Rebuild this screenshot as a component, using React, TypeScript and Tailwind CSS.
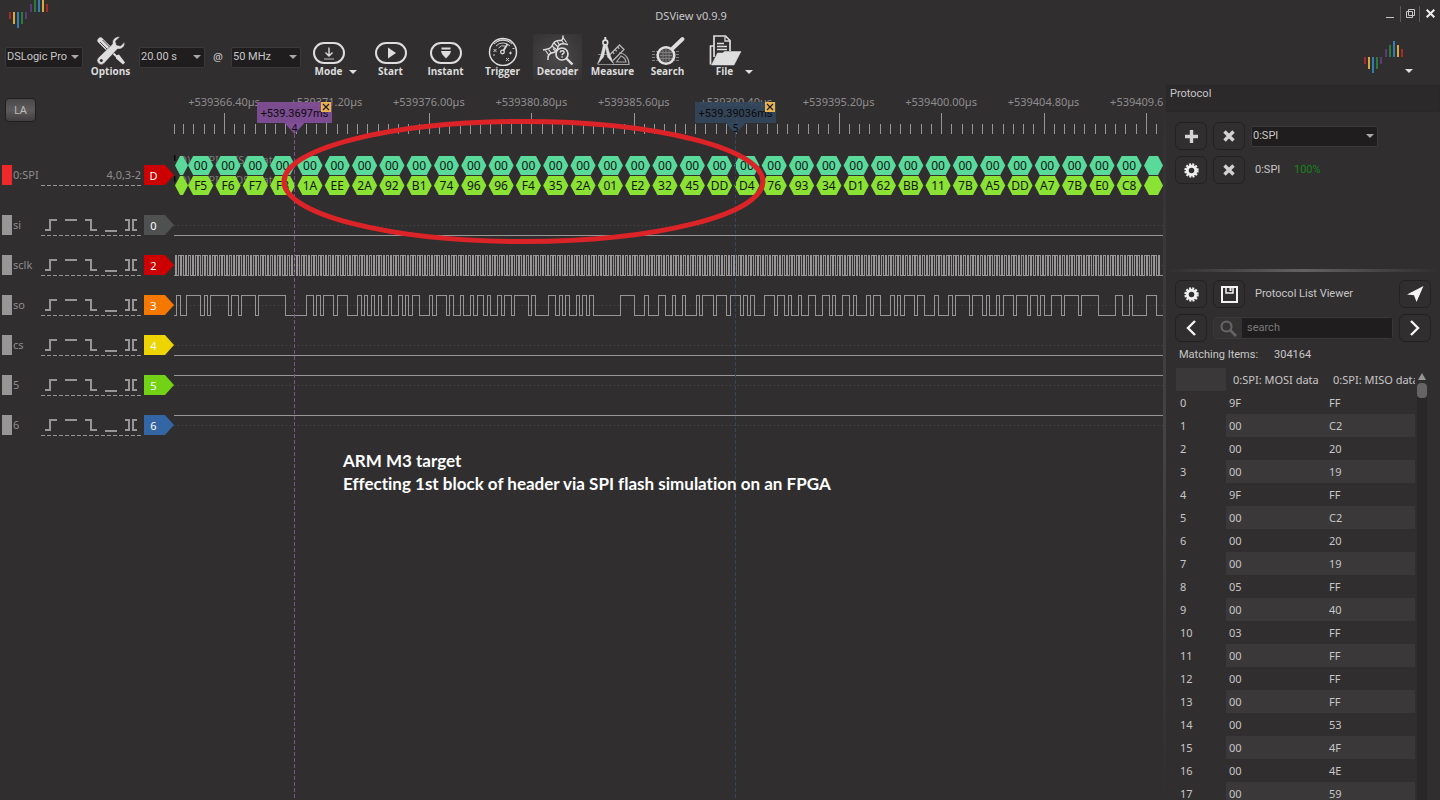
import type { ReactNode } from "react";

const GRAY = "#979596";

/* ---------- small pieces ---------- */

function LogoMark() {
  const bars: [number, number, number, string][] = [
    [0, 16, 7, "#a52a2c"],
    [4, 16, 12, "#d9a93c"],
    [8, 16, 16, "#2f7fb5"],
    [12, 16, 12, "#2a7a3c"],
    [16, 16, 7, "#5b3a78"],
    [21, 8, 8, "#5b3a78"],
    [25, 4, 12, "#2a7a3c"],
    [29, 0, 16, "#2f7fb5"],
    [33, 4, 12, "#d9a93c"],
    [37, 8, 8, "#a52a2c"],
  ];
  return (
    <svg width="40" height="32" viewBox="0 0 40 32" aria-hidden="true">
      {bars.map(([x, y, h, c]) => (
        <rect key={x} x={x} y={y} width="2" height={h} fill={c} />
      ))}
    </svg>
  );
}

function Caret({ fill = "#dedede" }: { fill?: string }) {
  return (
    <svg width="8" height="4" viewBox="0 0 8 4" aria-hidden="true">
      <path d="M0 0h8L4 4z" fill={fill} />
    </svg>
  );
}

function Combo({ label, value, width }: { label: string; value: string; width: string }) {
  return (
    <div className={`relative h-[21px] shrink-0 ${width}`}>
      <select
        aria-label={label}
        defaultValue={value}
        className="h-full w-full appearance-none rounded-xs border border-[#3b393a] bg-[#1f1d1e] pl-px font-['Roboto',sans-serif] text-[11px] text-[#c8c6c7] outline-none"
      >
        <option>{value}</option>
      </select>
      <span className="pointer-events-none absolute inset-y-0 right-1 flex items-center">
        <Caret fill="#a9a7a8" />
      </span>
    </div>
  );
}

function ToolButton({
  label,
  children,
  active = false,
}: {
  label: string;
  children: ReactNode;
  active?: boolean;
}) {
  return (
    <button
      type="button"
      className={`flex h-[46px] w-[49px] shrink-0 flex-col items-center justify-end ${
        active ? "bg-radial from-[#4b494a] to-[#343233]" : ""
      }`}
    >
      {children}
      <span className="h-[14px] font-['Open_Sans',sans-serif] text-[10px] leading-[10px] font-bold text-[#dcdcdc]">
        {label}
      </span>
    </button>
  );
}

function Pill({ children }: { children: ReactNode }) {
  return (
    <svg width="34" height="30" viewBox="0 0 34 30" aria-hidden="true">
      <rect x="2" y="7" width="30" height="20" rx="10" fill="none" stroke="#dedede" strokeWidth="2" />
      {children}
    </svg>
  );
}

function PanelButton({ label, children }: { label: string; children: ReactNode }) {
  return (
    <button
      type="button"
      aria-label={label}
      className="flex h-7 w-8 shrink-0 items-center justify-center rounded-md border border-[#232122] bg-[#302e2f]"
    >
      {children}
    </button>
  );
}

/* ---------- icons ---------- */

function OptionsIcon() {
  return (
    <svg width="30" height="30" viewBox="0 0 30 30" aria-hidden="true">
      <path d="M4.5 4.5L12 12" stroke="#dedede" strokeWidth="6" strokeLinecap="round" />
      <path d="M4 6l8 8M6.500 4l8 8" stroke="#555354" strokeWidth="1" />
      <path d="M14 14l8 8" stroke="#dedede" strokeWidth="2" />
      <path d="M20 19.500l3-1 6 8-2 2-7-6z" fill="#dedede" />
      <path
        d="M24 1c-4-1-8 2-7.500 7L2.500 21.500a4 4 0 0 0 5.500 6L21.500 13c4 .8 8-2.500 7-7l-4 4-4-1-1-4z"
        fill="#dedede"
        stroke="#302e2f"
        strokeWidth=".5"
      />
      <circle cx="5.300" cy="24.500" r="1.500" fill="#302e2f" />
    </svg>
  );
}

function TriggerIcon() {
  return (
    <svg width="30" height="32" viewBox="0 0 30 32" fill="none" stroke="#dedede" aria-hidden="true">
      <circle cx="15" cy="18" r="13.500" strokeWidth="1.500" />
      <circle cx="14.500" cy="18" r="1.800" strokeWidth="1.300" />
      <path d="M15.500 16.500l4-6.500" strokeWidth="1.800" />
      <path d="M10.500 14a6 6 0 0 1 6.500-2M8 12a9.500 9.500 0 0 1 14 0M6 10a12.500 12.500 0 0 1 18 0M8.500 8a11 11 0 0 1 13 0" strokeWidth=".9" />
      <path d="M5.500 15l3 3m0-3l-3 3M21 19l3 0m-1.500-1.500v3M18 24l3 3m0-3l-3 3M5 21h2M24.500 14.500h2" strokeWidth=".9" />
    </svg>
  );
}

function DecoderIcon() {
  return (
    <svg width="34" height="32" viewBox="0 0 34 32" fill="none" stroke="#dedede" aria-hidden="true">
      <path
        d="M2 16c4-1 7-.5 9-4 1.500-4 4-6 8-5.500 3 .3 3-2 3-5M7 26c-.5-4 .5-6 3.500-7 4-1 6-1.500 6.500-6 .5-3 4-4 10-2.500"
        strokeWidth="1.500"
      />
      <path d="M4.500 16.500l3.500 5M7.500 15.500l3 4M11 12l5 4M13 9l4 4M16 7l3 4.500M20 6l3 3.500M22 3.500l3.500 5M12 14.500l3 3" strokeWidth="1.100" />
      <circle cx="21" cy="20" r="6" fill="#403e3f" strokeWidth="1.700" />
      <path d="M25.500 24.500l6 6" strokeWidth="2.400" />
      <path d="M19.200 18.500c.2-2.500 4-2.300 3.800 0-.1 1.300-1.900 1.200-1.900 2.700M21.100 22.200v1.300" strokeWidth="1.500" />
    </svg>
  );
}

function MeasureIcon() {
  return (
    <svg width="36" height="32" viewBox="0 0 36 32" fill="none" stroke="#dedede" aria-hidden="true">
      <path d="M17 30.500h17c0-6.500-4-11.500-10-11.500M21.500 28H31c-.5-3-2.500-5-5-6z" stroke="#a9a7a8" strokeWidth="1.200" />
      <path d="M14.500 21L24.500 11l4.500 4.500-11 11M17.500 18l1.800 1.800M20 15.500l1.800 1.800M22.500 13l1.800 1.800" stroke="#b9b7b8" strokeWidth="1.300" />
      <path d="M3 20.500h12M2.500 30L11 12M2.500 30.500h15" stroke="#8a8889" strokeWidth="1" />
      <path d="M10.300 3v3" strokeWidth="2" />
      <circle cx="10.300" cy="8.500" r="2.400" strokeWidth="1.600" />
      <path d="M8.500 10.500L6 21l-3 8.500 5.500-6.500 2.500-11zM12 10.500l3 10.500 3.500 8.500-6-6.500-2-11z" fill="#dedede" strokeWidth=".5" />
    </svg>
  );
}

function SearchToolIcon() {
  return (
    <svg width="34" height="32" viewBox="0 0 34 32" fill="none" stroke="#dedede" aria-hidden="true">
      <path d="M1 17.500h28M1 20.500h28M1 23.500h28M1 26.500h28" stroke="#7d7b7c" strokeDasharray="3 1" />
      <circle cx="15" cy="21.500" r="8.300" fill="#4a4849" strokeWidth="2.600" />
      <path d="M9 18.500h12M9 21.500h12M9 24.500h12M12 16v11M15 15v13M18 16v11" stroke="#858384" strokeWidth=".9" />
      <path d="M21.500 14.500L31.500 5" strokeWidth="3.800" strokeLinecap="round" />
    </svg>
  );
}

function FileIcon() {
  return (
    <svg width="34" height="32" viewBox="0 0 34 32" fill="none" stroke="#dedede" aria-hidden="true">
      <path d="M6 12H2.500v18.500M6 23V2h11.500l4.500 4.500V17" strokeWidth="1.700" />
      <path d="M17 2.500V7h5M9 9.500h7M9 12.500h10M9 15.500h10" strokeWidth="1.300" />
      <path d="M9.500 19h5l2-1.500h16.500L26 31H3.500z" fill="#dedede" strokeWidth=".5" />
    </svg>
  );
}

function PlusIcon() {
  return (
    <svg width="13" height="13" viewBox="0 0 13 13" aria-hidden="true">
      <path d="M6.500 0v13M0 6.500h13" stroke="#d4d2d3" strokeWidth="3.400" />
    </svg>
  );
}

function CrossIcon() {
  return (
    <svg width="12" height="12" viewBox="0 0 12 12" aria-hidden="true">
      <path d="M1.500 1.500l9 9M10.500 1.500l-9 9" stroke="#d4d2d3" strokeWidth="3.400" />
    </svg>
  );
}

function GearIcon() {
  return (
    <svg width="15" height="15" viewBox="0 0 15 15" fill="none" stroke="#f0f0f0" aria-hidden="true">
      <circle cx="7.500" cy="7.500" r="4.300" strokeWidth="3" />
      <circle cx="7.500" cy="7.500" r="6.200" strokeWidth="2" strokeDasharray="2 1.246" />
    </svg>
  );
}

function SaveIcon() {
  return (
    <svg width="17" height="17" viewBox="0 0 17 17" fill="none" stroke="#f4f4f4" aria-hidden="true">
      <rect x="1" y="1" width="15" height="15" strokeWidth="2" />
      <path d="M5 1v6h7V1" strokeWidth="1.500" />
      <path d="M9.500 2v3" strokeWidth="2" />
    </svg>
  );
}

function SendIcon() {
  return (
    <svg width="17" height="16" viewBox="0 0 17 16" aria-hidden="true">
      <path d="M16.500 0L0 8.500l7 .8 2.500 6.700z" fill="#f4f4f4" />
    </svg>
  );
}

function Chevron({ dir }: { dir: "left" | "right" }) {
  return (
    <svg width="10" height="16" viewBox="0 0 10 16" fill="none" aria-hidden="true">
      <path d={dir === "left" ? "M9 1L2 8l7 7" : "M1 1l7 7-7 7"} stroke="#f4f4f4" strokeWidth="2.400" />
    </svg>
  );
}

/* ---------- channel column ---------- */

type Channel = { name: string; tag: string; color: string };

const CHANNELS: Channel[] = [
  { name: "si", tag: "0", color: "#4f5050" },
  { name: "sclk", tag: "2", color: "#cc0000" },
  { name: "so", tag: "3", color: "#f57900" },
  { name: "cs", tag: "4", color: "#edd400" },
  { name: "5", tag: "5", color: "#73d216" },
  { name: "6", tag: "6", color: "#3465a4" },
];

function Tag({ text, color }: { text: string; color: string }) {
  return (
    <svg width="30" height="20" viewBox="0 0 30 20" className="shrink-0" role="img" aria-label={text}>
      <path d="M0 0h21l9 10-9 10H0z" fill={color} />
      <text x="9.500" y="14.500" textAnchor="middle" fontSize="11" fill="#fff">
        {text}
      </text>
    </svg>
  );
}

function TriggerEdges() {
  return (
    <svg width="100" height="22" viewBox="0 0 100 22" fill="none" stroke={GRAY} shapeRendering="crispEdges" aria-hidden="true">
      <path
        d="M4 16h5V6h7M24 6h12M44 6h6v10h6M64 17h12M84 6h4v10h-4M96 6h-4v10h4"
        strokeWidth="2"
      />
      <path d="M0 21.500h100" strokeDasharray="4 2" />
    </svg>
  );
}

function ChannelColumn() {
  return (
    <aside className="flex w-[174px] shrink-0 flex-col text-[11px] text-[#8f8d8e]">
      <div className="h-[65px] pt-[13px] pl-[5px]">
        <button
          type="button"
          className="h-6 w-[31px] rounded-sm border border-[#201e1f] bg-linear-to-b from-[#4a4849] via-[#5c5a5b] to-[#403e3f] text-[11px] text-[#bcbabb]"
        >
          LA
        </button>
      </div>
      <div className="mb-[5px] flex h-[50px] items-center pl-0.5">
        <span className="h-5 w-2.5 bg-[#ef2929]" />
        <span className="w-[29px] pl-px whitespace-nowrap">0:SPI</span>
        <span className="mr-[3px] w-[100px] text-right leading-5">
          4,0,3-2
          <svg width="100" height="1" className="block" aria-hidden="true">
            <path d="M0 .5h100" stroke={GRAY} strokeDasharray="4 2" />
          </svg>
        </span>
        <Tag text="D" color="#cc0000" />
      </div>
      {CHANNELS.map((c) => (
        <div key={c.tag} className="flex h-10 items-center pl-0.5">
          <span className="h-5 w-2.5 bg-[#979596]" />
          <span className="w-[29px] pl-px">{c.name}</span>
          <span className="mr-[3px]">
            <TriggerEdges />
          </span>
          <Tag text={c.tag} color={c.color} />
        </div>
      ))}
    </aside>
  );
}

/* ---------- wave plot ---------- */

/* Plot coordinates start at the left edge of the first sample and the top of the ruler. */
const END = 989;
const RULER = ["366.40", "371.20", "376.00", "380.80", "385.60", "390.40", "395.20", "400.00", "404.80", "409.60"];
const FIRST_MAJOR = 50;
const MAJOR = 102.44;

const BYTES =
  "F5 F6 F7 F8 1A EE 2A 92 B1 74 96 96 F4 35 2A 01 E2 32 45 DD D4 76 93 34 D1 62 BB 11 7B A5 DD A7 7B E0 C8".split(" ");
const BYTE_STEP = 27.31;

/* Edge times of the "so" line, in thirds of a pixel; the line starts low. */
const SO_EDGES = [
  7, 19, 37, 79, 91, 100, 109, 161, 172, 193, 202, 244, 253, 334, 397, 418, 427, 439, 448, 478, 490, 520, 550, 562,
  571, 580, 592, 601, 613, 622, 643, 652, 673, 685, 694, 703, 715, 736, 766, 775, 787, 817, 826, 838, 859, 868, 889,
  898, 910, 928, 940, 949, 970, 982, 991, 1012, 1021, 1063, 1072, 1084, 1123, 1144, 1156, 1165, 1174, 1186, 1207,
  1216, 1225, 1237, 1246, 1258, 1339, 1381, 1411, 1423, 1453, 1474, 1495, 1504, 1525, 1534, 1567, 1576, 1585, 1618,
  1627, 1657, 1669, 1699, 1708, 1720, 1729, 1741, 1771, 1801, 1810, 1831, 1843, 1852, 1873, 1882, 1903, 1924, 1945,
  1966, 1975, 1984, 2005, 2026, 2038, 2047, 2077, 2089, 2098, 2119, 2149, 2161, 2170, 2179, 2191, 2221, 2230, 2251,
  2281, 2293, 2323, 2335, 2344, 2386, 2395, 2425, 2437, 2446, 2467, 2476, 2488, 2518, 2527, 2560, 2569, 2590, 2599,
  2611, 2632, 2662, 2671, 2713, 2722, 2773, 2824, 2845, 2866, 2875, 2917, 2947,
];

function squareWave(edges: number[], low: number, high: number) {
  let d = `M0 ${low}`;
  edges.forEach((x, i) => {
    d += `H${x}V${i % 2 === 0 ? high : low}`;
  });
  return `${d}H${END}`;
}

const soPath = squareWave(SO_EDGES.map((e) => Math.round(e / 3) + 0.5), 230.5, 210.5);
const clockPath = squareWave(
  Array.from({ length: 578 }, (_, i) => Math.floor(1 + i * 1.707) + 0.5),
  190.5,
  170.5,
);

function hex(left: number, right: number, top: number) {
  const c = 5;
  return `M${left + c} ${top}H${right - c}L${right} ${top + 9.5}L${right - c} ${top + 19}H${left + c}L${left} ${top + 9.5}Z`;
}

function ByteRow({ top, fill, values }: { top: number; fill: string; values: string[] }) {
  return (
    <g>
      <path d={hex(1, 14, top)} fill={fill} />
      {values.map((v, i) => {
        const cx = 26.7 + i * BYTE_STEP;
        return (
          <g key={i}>
            <path d={hex(cx - 12.6, cx + 12.6, top)} fill={fill} />
            <text x={cx} y={top + 14} textAnchor="middle" fontSize="12" fill="#141414">
              {v}
            </text>
          </g>
        );
      })}
      <path d={hex(970, 989, top)} fill={fill} />
    </g>
  );
}

function Cursor({
  x,
  left,
  width,
  text,
  index,
  fill,
  line,
}: {
  x: number;
  left: number;
  width: number;
  text: string;
  index: string;
  fill: string;
  line: string;
}) {
  const close = left + width - 11;
  return (
    <g>
      <path d={`M${x} 49V2000`} stroke={line} strokeDasharray="4 2" />
      <rect x={left} y="17" width={width} height="21" fill={fill} fillOpacity=".92" />
      <path d={`M${x - 10} 38h20l-10 11z`} fill={fill} />
      <text
        x={left + width / 2}
        y="32"
        textAnchor="middle"
        className="font-['Roboto',sans-serif]"
        fontSize="11"
        fill="#0c0a0b"
      >
        {text}
      </text>
      <text x={x} y="47" textAnchor="middle" fontSize="10" fill="#0c0a0b">
        {index}
      </text>
      <rect x={close} y="17" width="10" height="10" fill="#e9b44a" />
      <path d={`M${close + 2} 19l6 6m0-6l-6 6`} stroke="#1c1a1b" strokeWidth="1.200" />
    </g>
  );
}

function WavePlot() {
  const minors = Array.from(
    { length: 97 },
    (_, i) => Math.max(0, Math.round(FIRST_MAJOR + (i - 5) * (MAJOR / 10))) + 0.5,
  ).filter((x) => x < END);
  return (
    <main className="min-w-0 flex-1 overflow-hidden">
      <svg className="block h-full w-full" role="img" aria-label="Captured waveforms">
        <g fill="none" stroke={GRAY} shapeRendering="crispEdges">
          {minors.map((x) => (
            <path key={x} d={`M${x} 39v10`} />
          ))}
          {RULER.map((r, i) => (
            <path key={r} d={`M${Math.round(FIRST_MAJOR + i * MAJOR) + 0.5} 28v21`} />
          ))}
        </g>
        <g fontSize="11" fill="#8f8d8e" textAnchor="middle">
          {RULER.map((r, i) => (
            <text key={r} x={FIRST_MAJOR + i * MAJOR} y="21">
              {`+539${r}µs`}
            </text>
          ))}
        </g>

        <g stroke="#4c4a4b" strokeDasharray="1 3" shapeRendering="crispEdges">
          {[140.5, 180.5, 220.5, 260.5, 300.5, 340.5].map((y) => (
            <path key={y} d={`M0 ${y}H${END}`} />
          ))}
        </g>
        <g fill="none" stroke={GRAY} shapeRendering="crispEdges">
          <path d={`M0 150.500H${END}M0 270.500H${END}M0 290.500H${END}M0 330.500H${END}`} />
          <path d={clockPath} />
          <path d={soPath} />
        </g>

        <g fontSize="11" fill="#7d7b7c">
          <text x="5" y="79">D) 0:SPI: MISO data</text>
          <text x="5" y="99">D) 0:SPI: MOSI data</text>
        </g>
        <path d="M.5 70v6M.5 91v6" stroke="#0c0a0b" strokeWidth="2" />
        <ByteRow top={71} fill="#59d99a" values={BYTES.map(() => "00")} />
        <ByteRow top={91} fill="#8ae234" values={BYTES} />

        <Cursor x={120.5} left={83} width={75} text="+539.3697ms" index="4" fill="#824f99" line="#7b5289" />
        <Cursor x={561.5} left={521} width={81} text="+539.39036ms" index="5" fill="#33465c" line="#33475f" />

        <ellipse cx="349.500" cy="96.500" rx="239.500" ry="60" fill="none" stroke="#dc2428" strokeWidth="5" />
        <g className="font-['Lato',sans-serif] font-bold [font-variant-ligatures:none]" fontSize="17" fill="#fff">
          <text x="169" y="382">ARM M3 target</text>
          <text x="169" y="405">Effecting 1st block of header via SPI flash simulation on an FPGA</text>
        </g>
      </svg>
    </main>
  );
}

/* ---------- protocol panel ---------- */

const ROWS: [string, string][] = [
  ["9F", "FF"], ["00", "C2"], ["00", "20"], ["00", "19"], ["9F", "FF"], ["00", "C2"], ["00", "20"], ["00", "19"],
  ["05", "FF"], ["00", "40"], ["03", "FF"], ["00", "FF"], ["00", "FF"], ["00", "FF"], ["00", "53"], ["00", "4F"],
  ["00", "4E"], ["00", "59"],
];

function ProtocolPanel() {
  return (
    <section className="flex w-[274px] shrink-0 flex-col overflow-hidden font-['Roboto',sans-serif]">
      <h2 className="h-[27px] shrink-0 border border-[#292728] bg-[#2b292a] pl-[3px] leading-4">Protocol</h2>

      <div className="flex h-[157px] shrink-0 flex-col gap-1.5 pt-[10px] pl-[9px]">
        <div className="flex items-center gap-1.5">
          <PanelButton label="Add decoder">
            <PlusIcon />
          </PanelButton>
          <PanelButton label="Remove all decoders">
            <CrossIcon />
          </PanelButton>
          <Combo label="Decoder" value="0:SPI" width="w-[127px]" />
        </div>
        <div className="flex items-center gap-1.5">
          <PanelButton label="Decoder settings">
            <GearIcon />
          </PanelButton>
          <PanelButton label="Remove decoder">
            <CrossIcon />
          </PanelButton>
          <span className="w-[37px] pl-1">0:SPI</span>
          <span className="text-[#15851b]">100%</span>
        </div>
      </div>

      <div className="h-[3px] shrink-0 bg-linear-to-r from-[#302e2f] via-[#646263] to-[#302e2f]" />

      <div className="flex shrink-0 flex-col gap-1.5 pt-2 pr-[9px] pl-[9px]">
        <div className="flex items-center gap-1.5">
          <PanelButton label="List settings">
            <GearIcon />
          </PanelButton>
          <PanelButton label="Save list">
            <SaveIcon />
          </PanelButton>
          <h3 className="flex-1 pl-1">Protocol List Viewer</h3>
          <PanelButton label="Go to item">
            <SendIcon />
          </PanelButton>
        </div>
        <div className="flex items-center gap-1.5">
          <PanelButton label="Previous match">
            <Chevron dir="left" />
          </PanelButton>
          <div className="flex h-[22px] min-w-0 flex-1 rounded-sm border border-[#3a3839]">
            <button type="button" aria-label="Search" className="flex w-7 shrink-0 items-center justify-center bg-[#343233]">
              <svg width="17" height="17" viewBox="0 0 17 17" fill="none" stroke="#666465" aria-hidden="true">
                <circle cx="6.500" cy="6.500" r="5" strokeWidth="2.200" />
                <path d="M10.500 10.500l5.500 5.500" strokeWidth="2.600" />
              </svg>
            </button>
            <input
              type="text"
              aria-label="Search text"
              placeholder="search"
              className="min-w-0 flex-1 bg-[#1f1d1e] pl-[5px] text-[11px] outline-none placeholder:text-[#7c7a7b]"
            />
          </div>
          <PanelButton label="Next match">
            <Chevron dir="right" />
          </PanelButton>
        </div>
      </div>

      <p className="flex h-[26px] shrink-0 items-center gap-4 pl-[13px]">
        <span>Matching Items:</span>
        <span>304164</span>
      </p>

      <div className="flex min-h-0 flex-1 overflow-hidden pr-[13px] pl-[10px] font-['Noto_Sans',sans-serif]">
        <div className="min-w-0 flex-1 overflow-hidden">
          <table className="w-[250px] table-fixed border-collapse text-left">
            <thead>
              <tr className="h-[23px]">
                <th className="w-[50px] bg-[#3a3839]" aria-label="Row" />
                <th className="w-[100px] pl-[7px] font-normal whitespace-nowrap">0:SPI: MOSI data</th>
                <th className="w-[100px] pl-[7px] font-normal whitespace-nowrap">0:SPI: MISO data</th>
              </tr>
            </thead>
            <tbody>
              {ROWS.map(([mosi, miso], i) => (
                <tr key={i} className="h-[23px]">
                  <th scope="row" className="pl-1 font-normal">
                    {i}
                  </th>
                  <td className={`pl-[3px] ${i % 2 ? "bg-[#3a3839]" : ""}`}>{mosi}</td>
                  <td className={`pl-[3px] ${i % 2 ? "bg-[#3a3839]" : ""}`}>{miso}</td>
                </tr>
              ))}
            </tbody>
          </table>
        </div>
        <div className="ml-[2px] flex w-[10px] flex-col items-center pt-[5px]" aria-hidden="true">
          <svg width="8" height="7" viewBox="0 0 8 7">
            <path d="M4 0l4 7H0z" fill="#979596" />
          </svg>
          <div className="mt-[3px] w-full flex-1 bg-[#292728]">
            <div className="h-[15px] w-full rounded-sm bg-[#666465]" />
          </div>
        </div>
      </div>
    </section>
  );
}

/* ---------- page ---------- */

export default function App() {
  return (
    <div className="flex h-screen flex-col overflow-hidden bg-[#302e2f] font-['Noto_Sans',sans-serif] text-[11px] leading-4 text-[#c8c6c7]">
      <header className="grid h-[31px] shrink-0 grid-cols-[1fr_auto_1fr] items-center">
        <div className="-mt-[7px] pl-[9px]">
          <LogoMark />
        </div>
        <h1 className="pr-[58px]">DSView v0.9.9</h1>
        <div className="flex items-center justify-end pb-1">
          <button type="button" aria-label="Minimize" className="flex h-4 w-5 items-end justify-center pb-[4px]">
            <span className="h-px w-2 bg-[#c8c6c7]" />
          </button>
          <button type="button" aria-label="Restore" className="flex h-4 w-5 items-center justify-center border-x border-[#5a5859]">
            <svg width="9" height="9" viewBox="0 0 9 9" fill="none" stroke="#c8c6c7" aria-hidden="true">
              <path d="M2.500.5h6v6h-6zM.5 2.500h6v6h-6z" />
            </svg>
          </button>
          <button type="button" aria-label="Close" className="flex h-4 w-5 items-center justify-center">
            <svg width="9" height="9" viewBox="0 0 9 9" fill="none" stroke="#f0f0f0" strokeWidth="2" aria-hidden="true">
              <path d="M.7.7l7.600 7.600M8.300.7L.7 8.300" />
            </svg>
          </button>
        </div>
      </header>

      <nav aria-label="Capture" className="flex h-[54px] shrink-0 items-center pr-[27px] pb-0.5 pl-[5px]">
        <Combo label="Device" value="DSLogic Pro" width="w-[78px]" />
        <span className="ml-[3px] flex">
          <ToolButton label="Options">
            <OptionsIcon />
          </ToolButton>
        </span>
        <span className="ml-1">
          <Combo label="Duration" value="20.00 s" width="w-[66px]" />
        </span>
        <span className="w-[26px] text-center">@</span>
        <Combo label="Sample rate" value="50 MHz" width="w-[70px]" />
        <span className="ml-[3px] flex items-end">
          <ToolButton label="Mode">
            <Pill>
              <path d="M17 11.500v8M13.500 16.500l3.500 3.500 3.500-3.500" fill="none" stroke="#dedede" strokeWidth="1.400" />
              <path d="M12 23h10" stroke="#979596" strokeWidth="1.400" />
            </Pill>
          </ToolButton>
          <span className="-ml-1 flex h-4 w-[17px] items-center">
            <Caret />
          </span>
        </span>
        <span className="flex gap-1.5">
          <ToolButton label="Start">
            <Pill>
              <path d="M14 11.500v11l8-5.500z" fill="#dedede" />
            </Pill>
          </ToolButton>
          <ToolButton label="Instant">
            <Pill>
              <path d="M12.500 12.500h9" stroke="#dedede" strokeWidth="2" />
              <path d="M12 15h10l-1 3-4 4.500-4-4.500z" fill="#dedede" />
            </Pill>
          </ToolButton>
        </span>
        <span className="ml-2 flex gap-1.5">
          <ToolButton label="Trigger">
            <TriggerIcon />
          </ToolButton>
          <ToolButton label="Decoder" active>
            <DecoderIcon />
          </ToolButton>
          <ToolButton label="Measure">
            <MeasureIcon />
          </ToolButton>
          <ToolButton label="Search">
            <SearchToolIcon />
          </ToolButton>
        </span>
        <span className="ml-2 flex items-end">
          <ToolButton label="File">
            <FileIcon />
          </ToolButton>
          <span className="-ml-1 flex h-4 items-center">
            <Caret />
          </span>
        </span>
        <button type="button" aria-label="Help" className="ml-auto flex items-end gap-px">
          <LogoMark />
          <Caret />
        </button>
      </nav>

      <div className="flex min-h-0 flex-1">
        <ChannelColumn />
        <WavePlot />
        <div className="w-[3px] shrink-0 bg-linear-to-b from-[#302e2f] via-[#454344] to-[#302e2f]" />
        <ProtocolPanel />
      </div>
    </div>
  );
}
